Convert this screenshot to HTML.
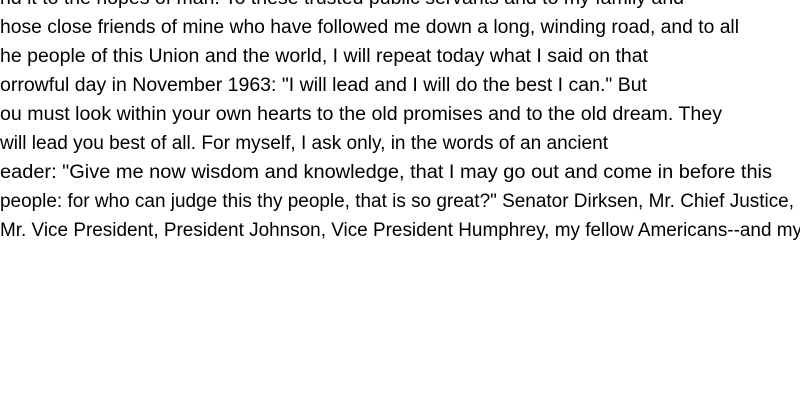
<!DOCTYPE html>
<html><head><style>html,body{margin:0;padding:0;background:#fff;width:800px;height:400px;overflow:hidden}</style></head>
<body>
<svg width="800" height="400" xmlns="http://www.w3.org/2000/svg" style="display:block">
<g font-family="Liberation Sans, sans-serif" font-size="19" fill="#000">
<text x="0" y="4" textLength="684" lengthAdjust="spacingAndGlyphs">nd it to the hopes of man. To these trusted public servants and to my family and</text>
<text x="0" y="33" textLength="739" lengthAdjust="spacingAndGlyphs">hose close friends of mine who have followed me down a long, winding road, and to all</text>
<text x="0" y="62" textLength="648" lengthAdjust="spacingAndGlyphs">he people of this Union and the world, I will repeat today what I said on that</text>
<text x="0" y="91" textLength="647" lengthAdjust="spacingAndGlyphs">orrowful day in November 1963: "I will lead and I will do the best I can." But</text>
<text x="0" y="120" textLength="722" lengthAdjust="spacingAndGlyphs">ou must look within your own hearts to the old promises and to the old dream. They</text>
<text x="0" y="149" textLength="608" lengthAdjust="spacingAndGlyphs">will lead you best of all. For myself, I ask only, in the words of an ancient</text>
<text x="0" y="178" textLength="772" lengthAdjust="spacingAndGlyphs">eader: "Give me now wisdom and knowledge, that I may go out and come in before this</text>
<text x="0" y="207" textLength="794" lengthAdjust="spacingAndGlyphs">people: for who can judge this thy people, that is so great?" Senator Dirksen, Mr. Chief Justice,</text>
<text x="0" y="236" textLength="802" lengthAdjust="spacingAndGlyphs">Mr. Vice President, President Johnson, Vice President Humphrey, my fellow Americans--and my</text>
</g>
</svg>
</body></html>
